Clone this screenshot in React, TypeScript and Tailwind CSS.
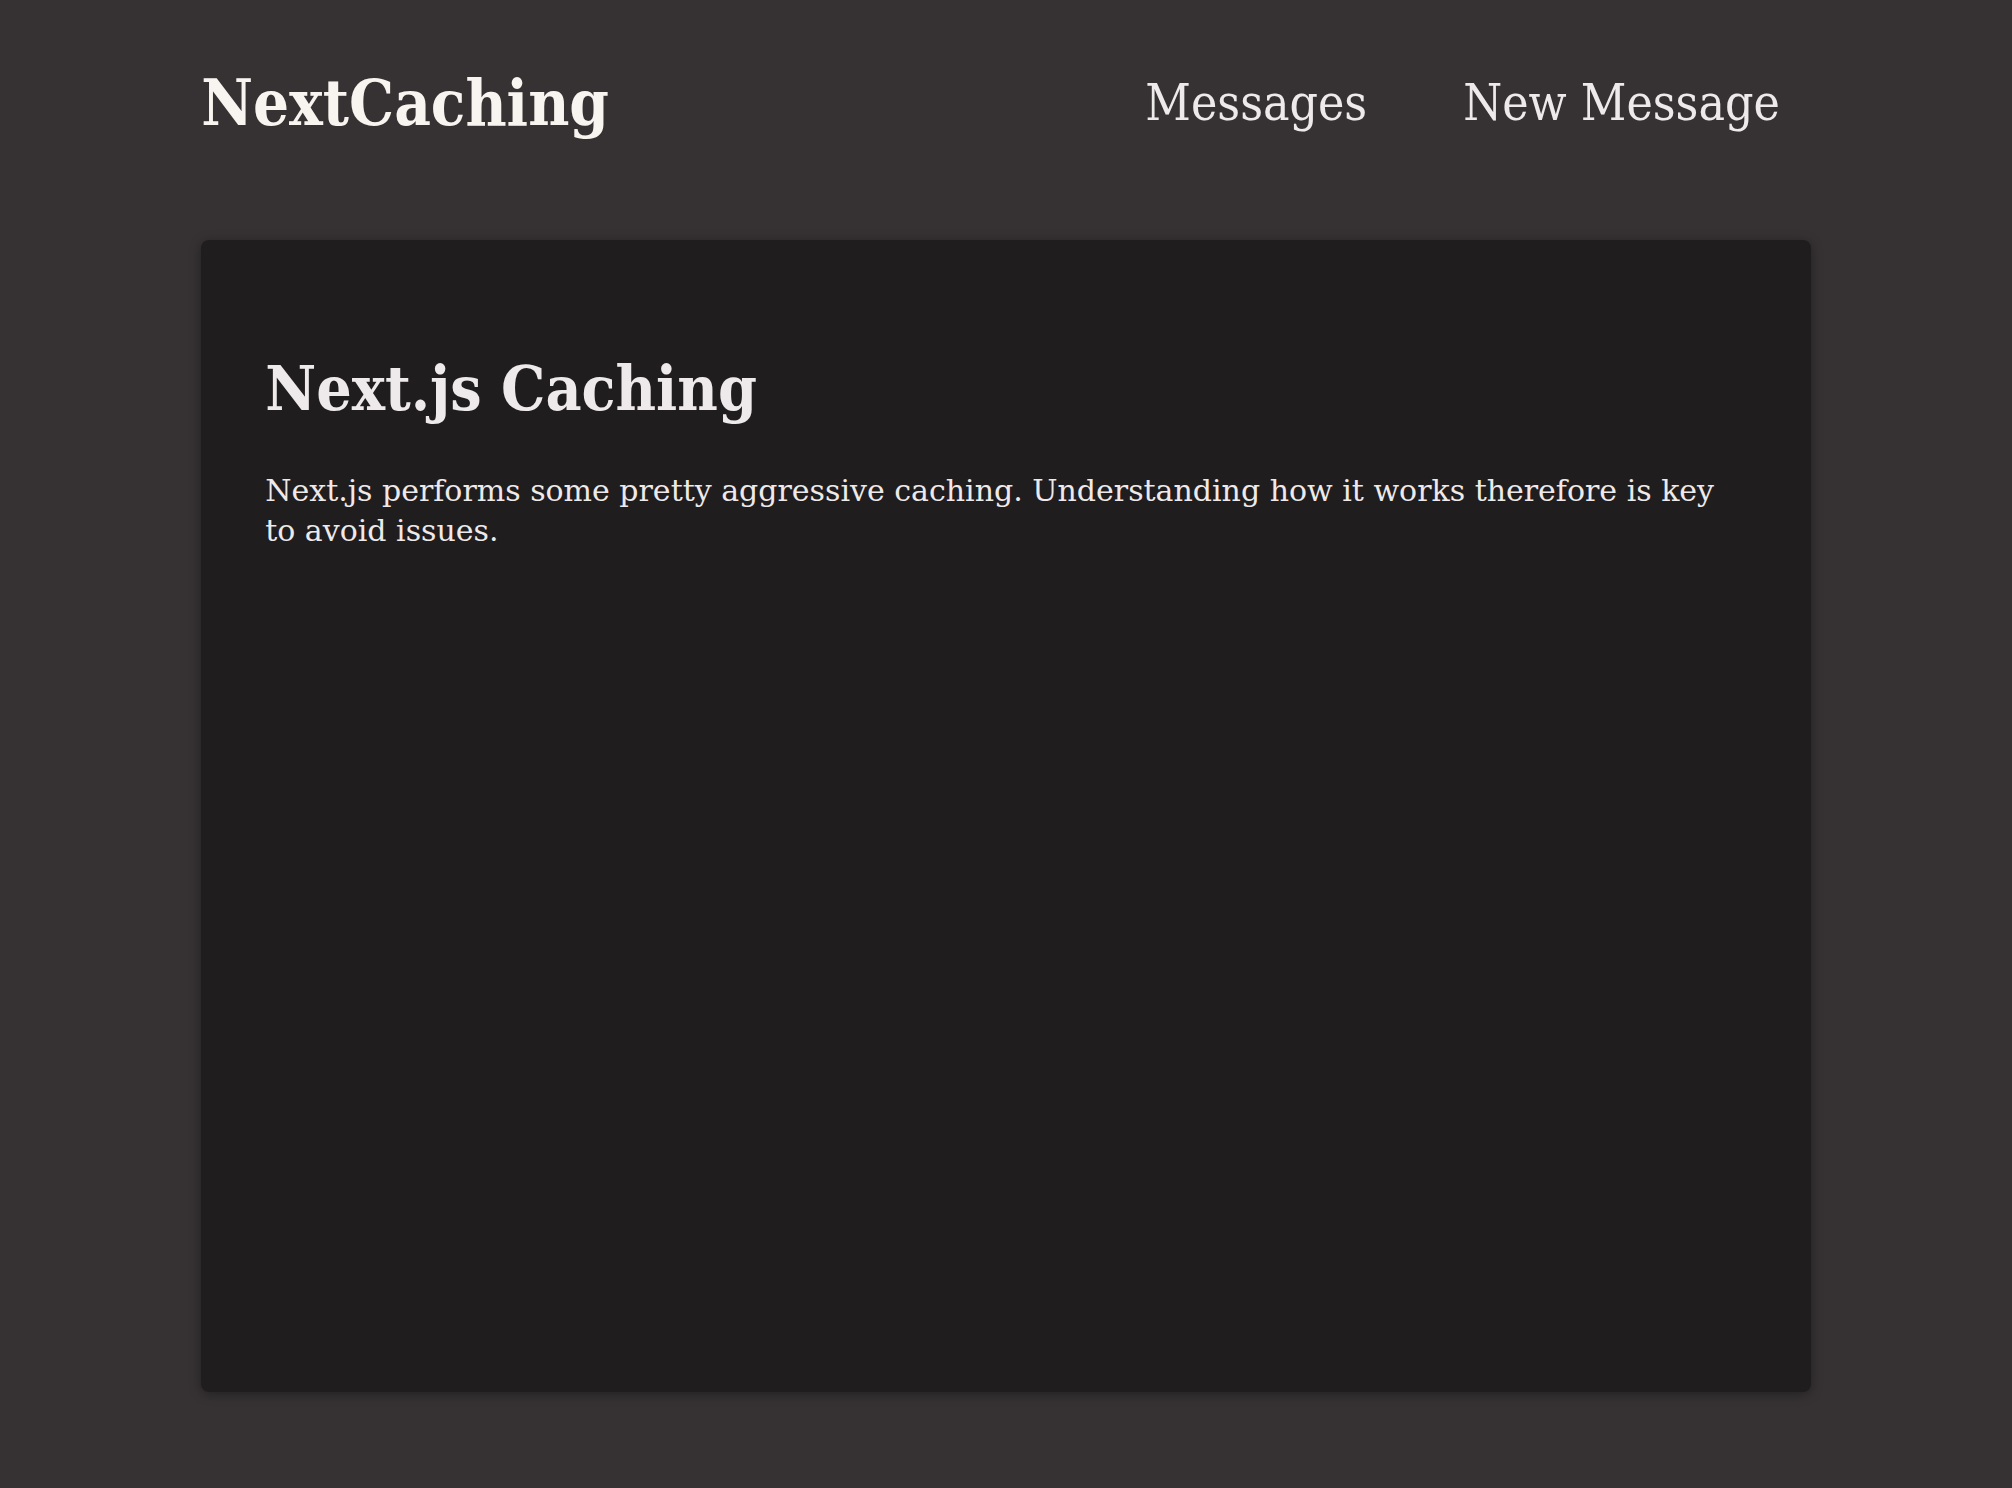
import React from 'react';

const App: React.FC = () => {
  return (
    <div className="min-h-screen bg-[#363233] text-[#eee9ea] font-['DejaVu_Serif',serif]">
      <header className="w-[80%] mx-auto pt-[72px] flex items-center justify-between">
        <a href="#" className="text-[63px] leading-none font-bold text-[#f8f5f1] font-['DejaVu_Serif_Condensed','DejaVu_Serif',serif]">
          NextCaching
        </a>
        <nav>
          <ul className="flex gap-[96px] pr-[31px] text-[49.5px] leading-none font-['DejaVu_Serif_Condensed','DejaVu_Serif',serif]">
            <li>
              <a href="#">Messages</a>
            </li>
            <li>
              <a href="#">New Message</a>
            </li>
          </ul>
        </nav>
      </header>

      <main className="w-[80%] mx-auto mt-[105px] h-[1152px] rounded-lg bg-[#201d1e] shadow-[0_2px_12px_rgba(0,0,0,0.35)] px-[64px] pt-[118px]">
        <h1 className="text-[62px] leading-none font-bold font-['DejaVu_Serif_Condensed','DejaVu_Serif',serif]">
          Next.js Caching
        </h1>
        <p className="mt-[51px] max-w-[1462px] text-[30px] leading-[40px]">
          Next.js performs some pretty aggressive caching. Understanding how it works therefore is key to avoid issues.
        </p>
      </main>
    </div>
  );
};

export default App;
